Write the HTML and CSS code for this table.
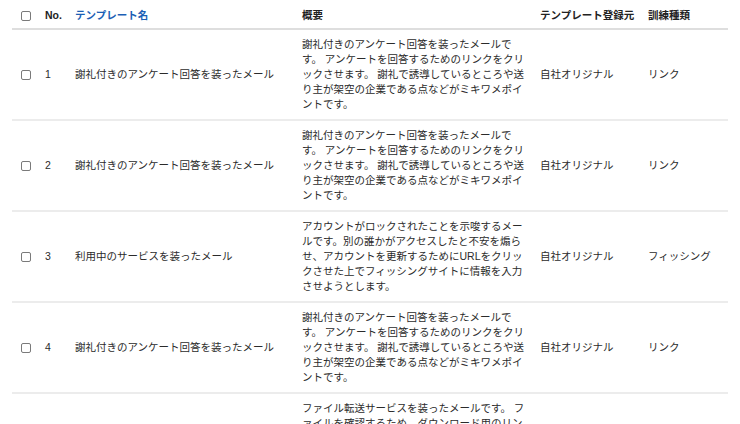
FILE: index.html
```html
<!DOCTYPE html>
<html lang="ja">
<head>
<meta charset="utf-8">
<title>テンプレート一覧</title>
<link rel="stylesheet" href="styles.css">
</head>
<body>
<table class="tbl">
  <colgroup>
    <col class="c-check">
    <col class="c-no">
    <col class="c-name">
    <col class="c-desc">
    <col class="c-src">
    <col class="c-type">
  </colgroup>
  <thead>
    <tr>
      <th><span class="cb"></span></th>
      <th>No.</th>
      <th class="sort">テンプレート名</th>
      <th>概要</th>
      <th>テンプレート登録元</th>
      <th>訓練種類</th>
    </tr>
  </thead>
  <tbody>
    <tr>
      <td><span class="cb"></span></td>
      <td>1</td>
      <td>謝礼付きのアンケート回答を装ったメール</td>
      <td class="desc">謝礼付きのアンケート回答を装ったメールです。 アンケートを回答するためのリンクをクリックさせます。 謝礼で誘導しているところや送り主が架空の企業である点などがミキワメポイントです。</td>
      <td>自社オリジナル</td>
      <td>リンク</td>
    </tr>
    <tr>
      <td><span class="cb"></span></td>
      <td>2</td>
      <td>謝礼付きのアンケート回答を装ったメール</td>
      <td class="desc">謝礼付きのアンケート回答を装ったメールです。 アンケートを回答するためのリンクをクリックさせます。 謝礼で誘導しているところや送り主が架空の企業である点などがミキワメポイントです。</td>
      <td>自社オリジナル</td>
      <td>リンク</td>
    </tr>
    <tr>
      <td><span class="cb"></span></td>
      <td>3</td>
      <td>利用中のサービスを装ったメール</td>
      <td class="desc">アカウントがロックされたことを示唆するメールです。別の誰かがアクセスしたと不安を煽らせ、アカウントを更新するためにURLをクリックさせた上でフィッシングサイトに情報を入力させようとします。</td>
      <td>自社オリジナル</td>
      <td>フィッシング</td>
    </tr>
    <tr>
      <td><span class="cb"></span></td>
      <td>4</td>
      <td>謝礼付きのアンケート回答を装ったメール</td>
      <td class="desc">謝礼付きのアンケート回答を装ったメールです。 アンケートを回答するためのリンクをクリックさせます。 謝礼で誘導しているところや送り主が架空の企業である点などがミキワメポイントです。</td>
      <td>自社オリジナル</td>
      <td>リンク</td>
    </tr>
    <tr>
      <td><span class="cb"></span></td>
      <td>5</td>
      <td>ファイル転送サービスを装ったメール</td>
      <td class="desc">ファイル転送サービスを装ったメールです。 ファイルを確認するため、ダウンロード用のリンクをクリックさせます。 送信元のアドレスや共有されたファイル名が不自然である点などがミキワメポイントです。</td>
      <td>自社オリジナル</td>
      <td>リンク</td>
    </tr>
  </tbody>
</table>
</body>
</html>
```

FILE: styles.css
```css
html, body {
  margin: 0;
  padding: 0;
  background: #ffffff;
  overflow: hidden;
}

body {
  font-family: "Liberation Sans", "Noto Sans CJK JP", sans-serif;
  font-size: 10.5px;
  color: #2b2b2b;
}

.tbl {
  width: 716px;
  margin: 0 12px;
  border-collapse: collapse;
  table-layout: fixed;
}

.c-check { width: 25px; }
.c-no { width: 30px; }
.c-name { width: 227px; }
.c-desc { width: 238px; }
.c-src { width: 108px; }
.c-type { width: 88px; }

th {
  text-align: left;
  font-weight: bold;
  color: #222222;
  line-height: 15px;
  padding: 8px 0 5px 8px;
  border-bottom: 2px solid #dedede;
  white-space: nowrap;
}

th.sort {
  color: #1c5fb5;
}

td {
  line-height: 15px;
  padding: 7px 0 7px 8px;
  border-bottom: 2px solid #ececec;
  vertical-align: middle;
}

th:first-child,
td:first-child {
  padding-left: 9px;
}

td.desc {
  padding-right: 2px;
}

.cb {
  display: block;
  width: 8px;
  height: 8px;
  border: 1px solid #7a7a7a;
  border-radius: 2px;
  background: #ffffff;
}
```
